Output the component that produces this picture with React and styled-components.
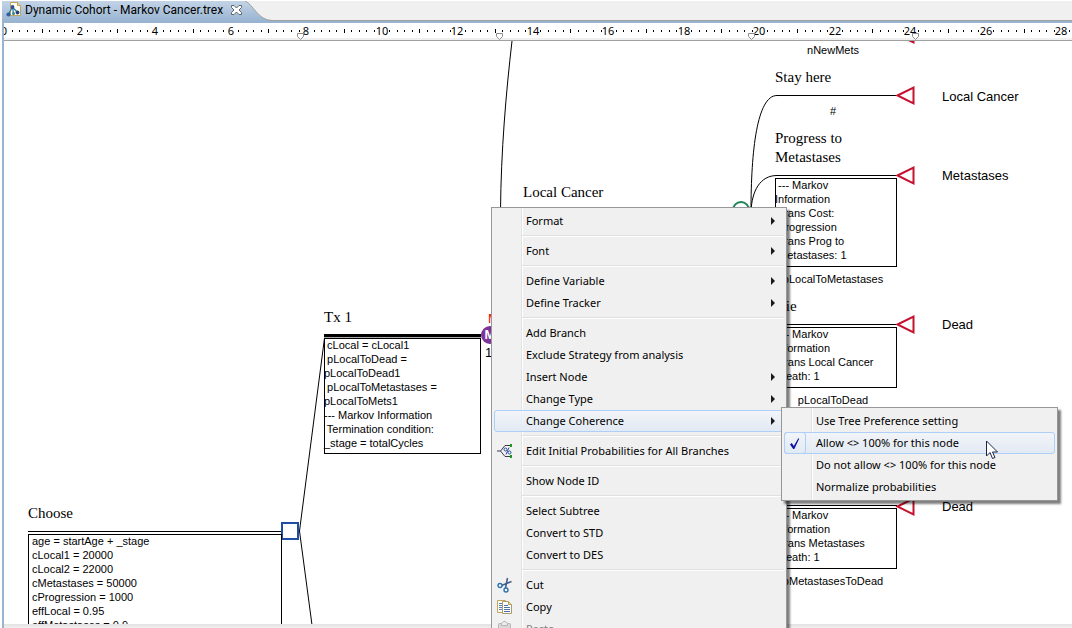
import React from "react";
import styled, { createGlobalStyle, css } from "styled-components";

const UI_FONT = `"Noto Sans", "Open Sans", sans-serif`;
const TAB_FONT = `Roboto, "Noto Sans", sans-serif`;
const SANS = `"Liberation Sans", Arial, sans-serif`;
const SERIF = `"Liberation Serif", "Times New Roman", serif`;

const GlobalStyle = createGlobalStyle`
  *, *::before, *::after { box-sizing: border-box; }
  body { margin: 0; background: #fff; font-family: ${UI_FONT}; color: #000; }
`;

const Window = styled.div`
  position: relative;
  display: flex;
  flex-direction: column;
  height: 100vh;
  padding-top: 1px;
  padding-left: 2px;
  overflow: hidden;
  background: #fff;
`;

/* ---------- editor tab ---------- */

const TabStrip = styled.div`
  display: flex;
  flex: none;
  height: 20px;
  background: linear-gradient(#f0f0f0, #f0f0f0 19px, #a0a0a0 19px);
`;

const Tab = styled.div`
  display: flex;
  align-items: center;
  gap: 8px;
  height: 20px;
  padding: 0 3px 2px 4px;
  background: linear-gradient(#c3d4e7, #99b4d1);
`;

const TabTitle = styled.button`
  display: flex;
  align-items: center;
  gap: 3px;
  padding: 0;
  border: 0;
  background: none;
  font: 12px/16px ${TAB_FONT};
  color: #000;
  white-space: nowrap;
`;

const CloseButton = styled.button`
  display: flex;
  padding: 0;
  border: 0;
  background: none;
`;

const TabTail = styled.svg`
  display: block;
  flex: none;
`;

const Frame = styled.div`
  display: flex;
  flex: 1;
  flex-direction: column;
  min-height: 0;
  border-top: 2px solid #99b4d1;
  border-left: 2px solid #99b4d1;
`;

/* ---------- ruler ---------- */

const RulerBar = styled.div`
  flex: none;
  height: 18px;
  overflow: hidden;
  border-bottom: 1px solid #a0a0a0;
  background: linear-gradient(#fff 15px, #f0f0f0 15px);

  svg { display: block; width: 100%; height: 17px; }
  text { font: 11px ${UI_FONT}; text-anchor: middle; }
`;

/* ---------- diagram ---------- */

const Canvas = styled.main`
  position: relative;
  flex: 1;
  min-height: 0;
  overflow: hidden;
`;

const StatusStrip = styled.div`
  flex: none;
  height: 4px;
  background: linear-gradient(#e2e2e2, #f0f0f0);
`;

const Edges = styled.svg`
  position: absolute;
  inset: 0;
  width: 100%;
  height: 100%;
`;

const placed = css`
  position: absolute;
  left: ${(p) => p.$x}px;
  top: ${(p) => p.$y}px;
`;

const NodeTitle = styled.h2`
  ${placed}
  margin: 0;
  font: 15px/19px ${SERIF};
  white-space: pre;
`;

const InfoBox = styled.div`
  ${placed}
  width: ${(p) => p.$w}px;
  height: ${(p) => p.$h}px;
  padding-left: ${(p) => p.$pad || 0}px;
  outline: 1px solid #000;
  outline-offset: -1px;
  font: 11px/14px ${SANS};
  white-space: pre;
`;

const Probability = styled.div`
  ${placed}
  width: 116px;
  font: 11px/14px ${SANS};
  text-align: center;
`;

const Payoff = styled.div`
  ${placed}
  font: 13px/16px ${SANS};
  color: ${(p) => p.$color || "#000"};
  white-space: nowrap;
`;

const MarkovBadge = styled.div`
  ${placed}
  width: 18px;
  height: 18px;
  border-radius: 50%;
  background: #7f3298;
  color: #fff;
  font: bold 13px/18px ${SANS};
  text-align: center;
`;

/* ---------- context menu ---------- */

const MenuList = styled.ul`
  position: absolute;
  margin: 0;
  padding: 2px;
  border: 1px solid #979797;
  list-style: none;
  background: linear-gradient(
    90deg,
    #f1f1f1 29px,
    #e2e3e3 29px,
    #e2e3e3 30px,
    #fff 30px,
    #fff 31px,
    #f0f0f0 31px
  );
  box-shadow: 3px 3px 2px rgba(0, 0, 0, 0.5);
  font: 11px/22px ${UI_FONT};
`;

const ContextMenu = styled(MenuList)`
  left: 491px;
  top: 207px;
  width: 296px;
`;

const SubMenu = styled(MenuList)`
  left: calc(100% - 3px);
  top: -3px;
  width: 277px;
  z-index: 1;
`;

const Entry = styled.li`
  position: relative;
`;

const EntryButton = styled.button`
  display: flex;
  align-items: center;
  width: 100%;
  height: 22px;
  padding: 0 8px 0 0;
  border: 1px solid ${(p) => (p.$active ? "#aecff7" : "transparent")};
  border-radius: 3px;
  background: ${(p) =>
    p.$active ? "linear-gradient(rgba(242,245,250,.8), rgba(223,232,244,.8))" : "none"};
  font: 11px/20px ${UI_FONT};
  color: ${(p) => (p.disabled ? "#838383" : "#000")};
  text-align: left;
  white-space: nowrap;
`;

const IconSlot = styled.span`
  display: flex;
  flex: none;
  align-items: center;
  justify-content: center;
  width: 22px;
  height: 22px;
  margin: 0 10px 0 -1px;
  border: 1px solid ${(p) => (p.$ticked ? "#aecff7" : "transparent")};
  border-radius: 3px;
`;

const EntryText = styled.span`
  flex: 1;
`;

const Divider = styled.li`
  height: 8px;
  margin-left: 28px;
  background: linear-gradient(
    transparent 3px,
    #e0e0e0 3px,
    #e0e0e0 4px,
    #fff 4px,
    #fff 5px,
    transparent 5px
  );
`;

const Pointer = styled.svg`
  position: absolute;
  left: 986px;
  top: 440px;
  z-index: 2;
  pointer-events: none;
`;

/* ---------- icons ---------- */

const TreeFileIcon = () => (
  <svg width="16" height="16" viewBox="0 0 16 16" aria-hidden="true">
    <path d="M4.500 .5h7l3 3v10h-10z" fill="#fffdf2" stroke="#c0a25c" />
    <path d="M11.500 .5v3h3" fill="#f1d48b" stroke="#c0a25c" />
    <path d="M2 13 6.500 5l5.500 6M6.500 5l1 7" fill="none" stroke="#2f7d9e" strokeWidth="1.300" />
    <circle cx="6.500" cy="5" r="1.900" fill="#2d4f96" />
    <circle cx="2.500" cy="12.500" r="2.100" fill="#2d5f9e" />
    <circle cx="7.500" cy="11.500" r="1.500" fill="#2f8a8a" />
    <circle cx="11.500" cy="10.500" r="1.900" fill="#24427e" />
  </svg>
);

const CloseIcon = () => (
  <svg width="11" height="10" viewBox="0 0 11 10" aria-hidden="true">
    <path
      d="M.5.5h2.500l2.500 2.500L8 .5h2.500v2L8 5l2.500 2.500v2H8L5.500 7 3 9.500H.5v-2L3 5 .5 2.500z"
      fill="#fff"
      stroke="#5f6670"
    />
  </svg>
);

const ArrowIcon = () => (
  <svg width="4" height="8" viewBox="0 0 4 8" aria-hidden="true">
    <path d="M0 0v8l4-4z" fill="#1a1a1a" />
  </svg>
);

const TickIcon = () => (
  <svg width="10" height="11" viewBox="0 0 10 11" aria-hidden="true">
    <path d="M0 6.500 1.800 5l2 3L8.300.2l.9.500L4.300 11H3.200z" fill="#0c12a1" />
  </svg>
);

const ProbabilityIcon = () => (
  <svg width="16" height="14" viewBox="0 0 16 14" aria-hidden="true">
    <path d="M0 7h3.500l4.500-5.500h6M3.500 7l4.500 5.500h6" fill="none" stroke="#3c3c50" />
    <rect x="13" y="0" width="2" height="3" fill="#12a012" />
    <rect x="13" y="11" width="2" height="3" fill="#12a012" />
    <path d="M12 3.500 9 10.500" stroke="#2b4f9c" />
    <circle cx="8.500" cy="5.500" r="1.500" fill="none" stroke="#2b4f9c" />
    <circle cx="12.500" cy="8.500" r="1.500" fill="none" stroke="#2b4f9c" />
  </svg>
);

const CutIcon = () => (
  <svg width="16" height="16" viewBox="0 0 16 16" aria-hidden="true">
    <path d="M10.500 1 8.500 11M14.500 4.500 4.500 8.500" fill="none" stroke="#46618c" strokeWidth="1.600" />
    <circle cx="3" cy="8.500" r="2" fill="#fff" stroke="#2a73ad" strokeWidth="1.400" />
    <circle cx="9" cy="13" r="2" fill="#fff" stroke="#2a73ad" strokeWidth="1.400" />
  </svg>
);

const CopyIcon = () => (
  <svg width="16" height="16" viewBox="0 0 16 16" aria-hidden="true">
    <path d="M.5 1.500h8v12h-8z" fill="#fffdf0" stroke="#c3a55a" />
    <path d="M2 4.500h3M2 6.500h3M2 8.500h3M2 10.500h3" stroke="#5d80b5" />
    <path d="M5.500 2.500h6l3 3v9h-9z" fill="#fff" stroke="#a89a72" />
    <path d="M11.500 2.500v3h3" fill="#f2d793" stroke="#b89b52" />
    <path d="M7 6.500h4M7 8.500h6M7 10.500h6M7 12.500h6" stroke="#4b72ad" />
  </svg>
);

const PasteIcon = () => (
  <svg width="16" height="16" viewBox="0 0 16 16" aria-hidden="true">
    <rect x="1.500" y="2.500" width="12" height="12" rx="1" fill="#d9d9d9" stroke="#b5b5b5" />
    <path d="M4.500 4.500v-2l2-2h2l2 2v2z" fill="#ececec" stroke="#b5b5b5" />
  </svg>
);

/* ---------- data ---------- */

const UNIT = 37.76;
const MARKERS = [296, 495, 747, 911];
const TERMINALS = [-7, 54, 134, 283, 465];

const BOXES = [
  {
    x: 24, y: 493, w: 254, h: 130, pad: 4,
    text: "age = startAge + _stage\ncLocal1 = 20000\ncLocal2 = 22000\ncMetastases = 50000\ncProgression = 1000\neffLocal = 0.95\neffMetastases = 0.9",
  },
  {
    x: 320, y: 297, w: 157, h: 116,
    text: " cLocal = cLocal1\n pLocalToDead =\npLocalToDead1\n pLocalToMetastases =\npLocalToMets1\n--- Markov Information\n Termination condition:\n_stage = totalCycles",
  },
  {
    x: 771, y: 137, w: 122, h: 89,
    text: " --- Markov\nInformation\n Trans Cost:\n Progression\n Trans Prog to\n Metastases: 1",
  },
  {
    x: 771, y: 286, w: 122, h: 61,
    text: " --- Markov\nInformation\n Trans Local Cancer\n Death: 1",
  },
  {
    x: 771, y: 467, w: 122, h: 61,
    text: " --- Markov\nInformation\n Trans Metastases\n Death: 1",
  },
];

const TITLES = [
  { x: 24, y: 463, text: "Choose" },
  { x: 320, y: 267, text: "Tx 1" },
  { x: 519, y: 142, text: "Local Cancer" },
  { x: 771, y: 27, text: "Stay here" },
  { x: 771, y: 88, text: "Progress to\nMetastases" },
  { x: 771, y: 256, text: "Die" },
];

const PROBABILITIES = [
  { y: 2, text: "nNewMets" },
  { y: 63, text: "#" },
  { y: 231, text: "pLocalToMetastases" },
  { y: 352, text: "pLocalToDead" },
  { y: 533, text: "pMetastasesToDead" },
];

const PAYOFFS = [
  { y: 48, text: "Local Cancer" },
  { y: 127, text: "Metastases" },
  { y: 276, text: "Dead" },
  { y: 458, text: "Dead" },
];

const COHERENCE = [
  { text: "Use Tree Preference setting" },
  { text: "Allow <> 100% for this node", active: true, icon: <TickIcon />, ticked: true },
  { text: "Do not allow <> 100% for this node" },
  { text: "Normalize probabilities" },
];

const MENU = [
  { text: "Format", more: true },
  null,
  { text: "Font", more: true },
  null,
  { text: "Define Variable", more: true },
  { text: "Define Tracker", more: true },
  null,
  { text: "Add Branch" },
  { text: "Exclude Strategy from analysis" },
  { text: "Insert Node", more: true },
  { text: "Change Type", more: true },
  { text: "Change Coherence", more: true, active: true, children: COHERENCE },
  null,
  { text: "Edit Initial Probabilities for All Branches", icon: <ProbabilityIcon /> },
  null,
  { text: "Show Node ID" },
  null,
  { text: "Select Subtree" },
  { text: "Convert to STD" },
  { text: "Convert to DES" },
  null,
  { text: "Cut", icon: <CutIcon /> },
  { text: "Copy", icon: <CopyIcon /> },
  { text: "Paste", icon: <PasteIcon />, disabled: true },
];

/* ---------- parts ---------- */

function Ruler() {
  const marks = Array.from({ length: 151 }, (_, i) => i).filter((i) => i % 10 !== 0);
  const labels = Array.from({ length: 15 }, (_, i) => i * 2);
  return (
    <RulerBar>
      <svg aria-label="Ruler">
        {marks.map((i) => (
          <rect
            key={i}
            x={Math.round((i * UNIT) / 5)}
            y={i % 5 === 0 ? 6 : 7}
            width="1"
            height={i % 5 === 0 ? 4 : 2}
          />
        ))}
        {labels.map((n) => (
          <text key={n} x={Math.round(n * UNIT)} y="12">{n}</text>
        ))}
        {MARKERS.map((x) => (
          <path
            key={x}
            d={`M${x - 2.5} 10.500h6v3l-3 3-3-3z`}
            fill="#fff"
            stroke="#8c8c8c"
          />
        ))}
      </svg>
    </RulerBar>
  );
}

function Diagram() {
  return (
    <Canvas>
      <Edges aria-hidden="true">
        <g fill="none" stroke="#000">
          <path d="M24 490.500h254M295.500 490 320.500 297M295.500 490 308 584" />
          <path d="M320 294.500h157" strokeWidth="3" />
          <path d="M320 296.500h157" stroke="#a8a8a8" />
          <path d="M508 0C502 52 497 110 496.500 170" />
          <path d="M747 170C747 110 753 54.500 773 54.500H893" />
          <path d="M747 170C748 150 756 134.500 773 134.500H893" />
          <path d="M771 283.500h122M771 464.500h122" />
        </g>
        <circle cx="737" cy="169" r="8" fill="#fff" stroke="#1d8455" strokeWidth="2" />
        <rect x="278" y="482" width="16" height="16" fill="#fff" stroke="#1d4da5" strokeWidth="2" />
        {TERMINALS.map((y) => (
          <path
            key={y}
            d={`M893.500 ${y + 0.5}l16-8v16z`}
            fill="#fff"
            stroke="#c4122f"
            strokeWidth="2"
          />
        ))}
      </Edges>
      {TITLES.map((t) => (
        <NodeTitle key={t.text} $x={t.x} $y={t.y}>{t.text}</NodeTitle>
      ))}
      {BOXES.map((b) => (
        <InfoBox key={b.y} $x={b.x} $y={b.y} $w={b.w} $h={b.h} $pad={b.pad}>{b.text}</InfoBox>
      ))}
      {PROBABILITIES.map((p) => (
        <Probability key={p.text} $x={771} $y={p.y}>{p.text}</Probability>
      ))}
      {PAYOFFS.map((p) => (
        <Payoff key={p.y} $x={938} $y={p.y}>{p.text}</Payoff>
      ))}
      <Payoff $x={484} $y={270} $color="#f00">M</Payoff>
      <MarkovBadge $x={477} $y={285}>M</MarkovBadge>
      <Payoff $x={481} $y={304}>1</Payoff>
    </Canvas>
  );
}

function MenuEntry({ item }) {
  return (
    <Entry role="none">
      <EntryButton role="menuitem" $active={item.active} disabled={item.disabled}>
        <IconSlot $ticked={item.ticked}>{item.icon}</IconSlot>
        <EntryText>{item.text}</EntryText>
        {item.more && <ArrowIcon />}
      </EntryButton>
      {item.children && (
        <SubMenu role="menu" aria-label={item.text}>
          {item.children.map((child) => (
            <MenuEntry key={child.text} item={child} />
          ))}
        </SubMenu>
      )}
    </Entry>
  );
}

export default function App() {
  return (
    <Window>
      <GlobalStyle />
      <TabStrip>
        <Tab>
          <TabTitle>
            <TreeFileIcon />
            Dynamic Cohort - Markov Cancer.trex
          </TabTitle>
          <CloseButton aria-label="Close tab">
            <CloseIcon />
          </CloseButton>
        </Tab>
        <TabTail width="27" height="20" viewBox="0 0 27 20" aria-hidden="true">
          <defs>
            <linearGradient id="tabFill" x1="0" y1="0" x2="0" y2="1">
              <stop offset="0" stopColor="#c3d4e7" />
              <stop offset="1" stopColor="#99b4d1" />
            </linearGradient>
          </defs>
          <path d="M0 0C8 3 13 19.500 27 19.500V20H0z" fill="url(#tabFill)" />
          <path d="M0 0C8 3 13 19.500 27 19.500" fill="none" stroke="#a0a0a0" />
        </TabTail>
      </TabStrip>
      <Frame>
        <Ruler />
        <Diagram />
        <StatusStrip />
      </Frame>
      <ContextMenu role="menu" aria-label="Node menu">
        {MENU.map((item, i) =>
          item ? <MenuEntry key={item.text} item={item} /> : <Divider key={i} role="separator" />
        )}
      </ContextMenu>
      <Pointer width="13" height="20" viewBox="0 0 13 20" aria-hidden="true">
        <path
          d="M.5 1v15l3.500-3.500 2.500 6 2.500-1-2.500-5.500h5z"
          fill="#fff"
          stroke="#1b2440"
        />
      </Pointer>
    </Window>
  );
}
